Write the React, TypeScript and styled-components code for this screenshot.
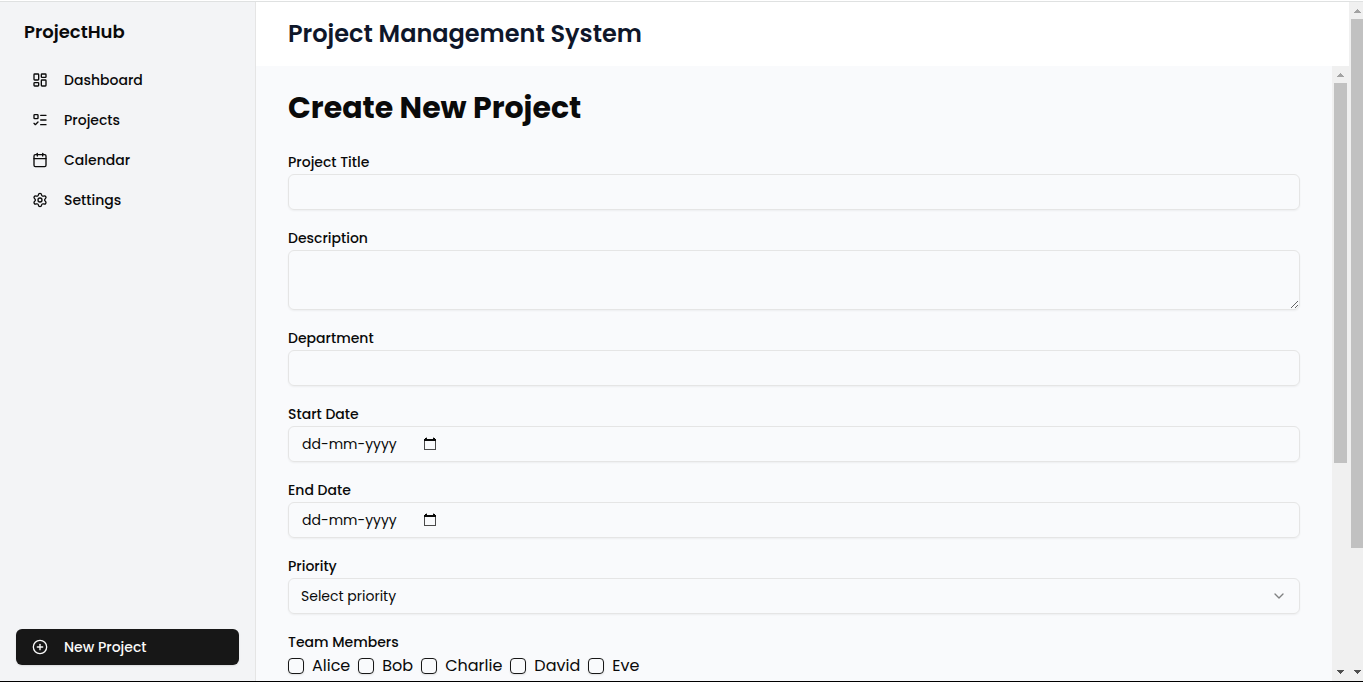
import React from "react";
import styled, { createGlobalStyle } from "styled-components";
import {
  Calendar,
  ChevronDown,
  CirclePlus,
  LayoutDashboard,
  ListTodo,
  Settings,
} from "lucide-react";

const GlobalStyle = createGlobalStyle`
  *, *::before, *::after { box-sizing: border-box; }
  body {
    margin: 0;
    background: #ffffff;
    color: #0a0a0a;
    font-family: Poppins, Inter, "Liberation Sans", sans-serif;
    font-size: 16px;
    line-height: 24px;
  }
  button, input, select, textarea { font: inherit; color: inherit; }
`;

const Shell = styled.div`
  display: flex;
  flex-direction: column;
  height: 100vh;
  padding-top: 1px;
  border-bottom: 1px solid #000000;
`;

const Frame = styled.div`
  display: flex;
  flex: 1;
  min-height: 0;
  border-top: 1px solid #dfe1e1;
`;

const Sidebar = styled.aside`
  display: flex;
  flex-direction: column;
  flex: none;
  width: 256px;
  padding: 16px;
  background: #f3f4f6;
  border-right: 1px solid #e5e5e5;
`;

const Brand = styled.div`
  padding: 0 8px;
  margin-bottom: 16px;
  font-size: 18px;
  font-weight: 600;
  line-height: 28px;
`;

const Nav = styled.nav`
  display: flex;
  flex-direction: column;
  flex: 1;
  gap: 4px;
`;

const NavLink = styled.a`
  display: flex;
  align-items: center;
  gap: 16px;
  height: 36px;
  padding: 0 16px;
  border-radius: 6px;
  color: inherit;
  font-size: 14px;
  font-weight: 500;
  line-height: 20px;
  text-decoration: none;
`;

const PrimaryButton = styled.button`
  display: flex;
  align-items: center;
  gap: 16px;
  height: 36px;
  padding: 0 16px;
  border: 0;
  border-radius: 6px;
  background: #171717;
  color: #fafafa;
  font-size: 14px;
  font-weight: 500;
  line-height: 20px;
  box-shadow: 0 1px 2px rgba(0, 0, 0, 0.1);
`;

const Main = styled.main`
  display: flex;
  flex-direction: column;
  flex: 1;
  min-width: 0;
`;

const Header = styled.header`
  display: flex;
  align-items: center;
  flex: none;
  height: 64px;
  padding: 0 32px;
  background: #ffffff;
`;

const HeaderTitle = styled.h1`
  margin: 0;
  color: #0f172a;
  font-size: 24px;
  font-weight: 600;
  line-height: 32px;
`;

const Body = styled.div`
  display: flex;
  flex: 1;
  min-height: 0;
  background: #f9fafc;
`;

const Content = styled.div`
  flex: 1;
  min-width: 0;
  padding: 24px 32px;
  overflow-y: auto;
  scrollbar-width: none;
`;

const PageTitle = styled.h2`
  margin: 0 0 24px;
  font-size: 30px;
  font-weight: 700;
  line-height: 36px;
`;

const Form = styled.form`
  display: flex;
  flex-direction: column;
  gap: 16px;
`;

const Field = styled.div`
  display: flex;
  flex-direction: column;
`;

const Label = styled.label`
  font-size: 14px;
  font-weight: 500;
  line-height: 24px;
`;

const TextInput = styled.input`
  width: 100%;
  height: 36px;
  padding: 4px 12px;
  border: 1px solid #e5e5e5;
  border-radius: 6px;
  background: transparent;
  font-size: 14px;
  box-shadow: 0 1px 2px rgba(0, 0, 0, 0.05);
`;

const TextArea = styled.textarea`
  display: block;
  width: 100%;
  height: 60px;
  padding: 8px 12px;
  border: 1px solid #e5e5e5;
  border-radius: 6px;
  background: transparent;
  font-size: 14px;
  box-shadow: 0 1px 2px rgba(0, 0, 0, 0.05);
  resize: vertical;
`;

const DateBox = styled.div`
  display: flex;
  align-items: center;
  height: 36px;
  padding: 0 13px;
  border: 1px solid #e5e5e5;
  border-radius: 6px;
  box-shadow: 0 1px 2px rgba(0, 0, 0, 0.05);
`;

const DateText = styled.input`
  width: 120px;
  padding: 0;
  border: 0;
  background: transparent;
  font-size: 14px;
  line-height: 24px;

  &::placeholder {
    color: #0a0a0a;
    opacity: 1;
  }
`;

const DateButton = styled.button`
  display: grid;
  place-items: center;
  width: 16px;
  height: 16px;
  padding: 0;
  border: 0;
  background: transparent;
`;

const SelectBox = styled.div`
  display: grid;
  align-items: center;

  & > * {
    grid-area: 1 / 1;
  }

  & > svg {
    justify-self: end;
    margin-right: 13px;
    opacity: 0.5;
    pointer-events: none;
  }
`;

const Select = styled.select`
  appearance: none;
  width: 100%;
  height: 36px;
  padding: 0 12px;
  border: 1px solid #e5e5e5;
  border-radius: 6px;
  background: transparent;
  font-size: 14px;
  box-shadow: 0 1px 2px rgba(0, 0, 0, 0.05);
`;

const Group = styled.fieldset`
  min-width: 0;
  margin: 0;
  padding: 0;
  border: 0;
`;

const Legend = styled.legend`
  padding: 0;
  font-size: 14px;
  font-weight: 500;
  line-height: 24px;
`;

const Options = styled.div`
  display: flex;
  flex-wrap: wrap;
  gap: 8px;
`;

const Option = styled.label`
  display: flex;
  align-items: center;
  gap: 8px;
  font-size: 16px;
`;

const Checkbox = styled.input`
  appearance: none;
  width: 16px;
  height: 16px;
  margin: 0;
  border: 1px solid #171717;
  border-radius: 4px;
  box-shadow: 0 1px 2px rgba(0, 0, 0, 0.1);

  &:checked {
    background: #171717;
  }
`;

const Track = styled.div<{ $width: number }>`
  display: flex;
  flex-direction: column;
  flex: none;
  width: ${(p) => p.$width}px;
  background: #f0f0f0;
  overflow: hidden;
`;

const TrackArrow = styled.svg`
  display: block;
  flex: none;
  width: 17px;
  height: 17px;
`;

const TrackRail = styled.div`
  flex: 1;
  min-height: 0;
`;

const Thumb = styled.div<{ $share: number }>`
  width: 13px;
  height: ${(p) => p.$share}%;
  margin-left: 2px;
  background: #c1c1c1;
`;

function ScrollTrack({ width, share }: { width: number; share: number }) {
  return (
    <Track $width={width} aria-hidden="true">
      <TrackArrow viewBox="0 0 17 17" shapeRendering="crispEdges">
        <path d="M8 7h1v1h1v1h1v1h1v1H5v-1h1V9h1V8h1z" fill="#a3a3a3" />
      </TrackArrow>
      <TrackRail>
        <Thumb $share={share} />
      </TrackRail>
      <TrackArrow viewBox="0 0 17 17" shapeRendering="crispEdges">
        <path d="M5 6h7v1h-1v1h-1v1H9v1H8V9H7V8H6V7H5z" fill="#505050" />
      </TrackArrow>
    </Track>
  );
}

function DateField({ id, label }: { id: string; label: string }) {
  return (
    <Field>
      <Label htmlFor={id}>{label}</Label>
      <DateBox>
        <DateText id={id} type="text" placeholder="dd-mm-yyyy" />
        <DateButton type="button" aria-label={`Choose ${label}`}>
          <svg width="12" height="14" viewBox="0 0 12 14" shapeRendering="crispEdges">
            <path d="M0 4h1v8h10V4h1v9H0z" fill="#4a4a4a" />
            <path d="M1 1h2v1h6V1h2v1h1v2H0V2h1z" fill="#0a0a0a" />
            <path d="M2 0h1v1H2zM9 0h1v1H9z" fill="#9a9a9a" />
          </svg>
        </DateButton>
      </DateBox>
    </Field>
  );
}

const links = [
  { name: "Dashboard", Icon: LayoutDashboard },
  { name: "Projects", Icon: ListTodo },
  { name: "Calendar", Icon: Calendar },
  { name: "Settings", Icon: Settings },
];

const members = ["Alice", "Bob", "Charlie", "David", "Eve"];

export default function App() {
  return (
    <Shell>
      <GlobalStyle />
      <Frame>
        <Sidebar>
          <Brand>ProjectHub</Brand>
          <Nav>
            {links.map(({ name, Icon }) => (
              <NavLink key={name} href={`#${name.toLowerCase()}`}>
                <Icon size={16} />
                {name}
              </NavLink>
            ))}
          </Nav>
          <PrimaryButton type="button">
            <CirclePlus size={16} />
            New Project
          </PrimaryButton>
        </Sidebar>
        <Main>
          <Header>
            <HeaderTitle>Project Management System</HeaderTitle>
          </Header>
          <Body>
            <Content>
              <PageTitle>Create New Project</PageTitle>
              <Form>
                <Field>
                  <Label htmlFor="title">Project Title</Label>
                  <TextInput id="title" type="text" />
                </Field>
                <Field>
                  <Label htmlFor="description">Description</Label>
                  <TextArea id="description" />
                </Field>
                <Field>
                  <Label htmlFor="department">Department</Label>
                  <TextInput id="department" type="text" />
                </Field>
                <DateField id="start" label="Start Date" />
                <DateField id="end" label="End Date" />
                <Field>
                  <Label htmlFor="priority">Priority</Label>
                  <SelectBox>
                    <Select id="priority" defaultValue="">
                      <option value="">Select priority</option>
                      <option value="low">Low</option>
                      <option value="medium">Medium</option>
                      <option value="high">High</option>
                    </Select>
                    <ChevronDown size={16} />
                  </SelectBox>
                </Field>
                <Group>
                  <Legend>Team Members</Legend>
                  <Options>
                    {members.map((name) => (
                      <Option key={name}>
                        <Checkbox type="checkbox" name="members" value={name} />
                        {name}
                      </Option>
                    ))}
                  </Options>
                </Group>
              </Form>
            </Content>
            <ScrollTrack width={17} share={65.4} />
          </Body>
        </Main>
        <ScrollTrack width={14} share={82} />
      </Frame>
    </Shell>
  );
}
